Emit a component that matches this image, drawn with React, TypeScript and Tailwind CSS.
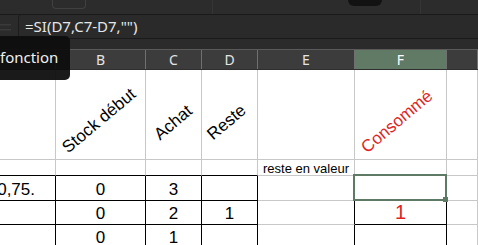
import React from "react";

const G = "border-[#c8c8c8]";

function Cell({
  className = "",
  children,
}: {
  className?: string;
  children?: React.ReactNode;
}) {
  return (
    <div className={`relative border-r border-b overflow-visible ${className}`}>
      {children}
    </div>
  );
}

export default function App() {
  const cols = "grid grid-cols-[56px_90px_56px_56px_97px_92px_1fr]";
  const rot =
    "absolute origin-bottom-left -rotate-[40deg] whitespace-nowrap text-[17px] leading-none";
  return (
    <div className="relative w-[478px] h-[245px] overflow-hidden bg-white font-['Liberation_Sans',Arial,sans-serif]">
      {/* toolbar */}
      <div className="h-[15px] bg-[#2c2c2c] border-b border-[#1a1a1a] flex">
        <div className="w-[52px]" />
        <div className="w-[34px] h-[9px] border-x border-b border-[#404040] rounded-b-[4px]" />
        <div className="w-[126px]" />
        <div className="w-px h-full bg-[#353535]" />
        <div className="w-[135px]" />
        <div className="w-[34px] h-[6px] bg-[#121212] rounded-b-[6px]" />
        <div className="w-[38px]" />
        <div className="w-px h-full bg-[#353535]" />
      </div>
      {/* formula bar */}
      <div className="h-[24px] bg-[#2b2b2b] border-b border-[#1a1a1a] flex">
        <div className="w-[18px] flex items-center">
          <svg width="12" height="10" viewBox="0 0 12 10">
            <rect x="0" y="2" width="11" height="1.5" fill="#3a3a3a" />
            <rect x="0" y="7" width="11" height="1.5" fill="#3a3a3a" />
          </svg>
        </div>
        <div className="flex-1 h-[23px] border-l border-[#1c1c1c] rounded-tl-[3px] bg-[#2a2a2a] flex items-center pl-[6px] text-[15px] text-[#e6e6e6] font-['Noto_Sans',sans-serif]">
          =SI(D7,C7-D7,"")
        </div>
      </div>
      <div className="h-[10px] bg-[#2b2b2b]" />
      {/* column header */}
      <div
        className={`${cols} h-[21px] bg-[#3c3c3c] border-t border-[#5a5a5a] border-b border-b-[#2f2f2f] text-[14px] text-[#e4e4e4] font-['Noto_Sans',sans-serif]`}
      >
        {["A", "B", "C", "D", "E", "F", "G"].map((c) => (
          <div
            key={c}
            className={`border-r border-[#707070] flex items-center justify-center leading-none ${
              c === "F" ? "bg-[#617a66] text-white" : ""
            }`}
          >
            {c === "A" || c === "G" ? "" : c}
          </div>
        ))}
      </div>
      {/* body */}
      <div className={`${cols} grid-rows-[90px_16px_25px_24px_30px] text-black`}>
        {/* row 1 */}
        <Cell className={G} />
        <Cell className={G}>
          <span className={`${rot} left-[14px] bottom-[3px]`}>Stock début</span>
        </Cell>
        <Cell className={G}>
          <span className={`${rot} left-[16px] bottom-[16px]`}>Achat</span>
        </Cell>
        <Cell className={G}>
          <span className={`${rot} left-[13px] bottom-[16px]`}>Reste</span>
        </Cell>
        <Cell className={G} />
        <Cell className={G}>
          <span className={`${rot} left-[14px] bottom-[3px] text-[#e02424]`}>Consommé</span>
        </Cell>
        <Cell className={G} />
        {/* row 2 */}
        <Cell className="border-r-[#c8c8c8] border-b-black" />
        <Cell className="border-r-[#c8c8c8] border-b-black" />
        <Cell className="border-r-[#c8c8c8] border-b-black" />
        <Cell className="border-r-[#c8c8c8] border-b-black" />
        <Cell className={G}>
          <span className="absolute left-[5px] bottom-[0px] text-[13px] leading-none whitespace-nowrap">
            reste en valeur
          </span>
        </Cell>
        <Cell className={G} />
        <Cell className={G} />
        {/* row 3 */}
        <Cell className="border-black overflow-hidden flex items-end justify-end pr-[20px] text-[17px] leading-none pb-[2px]">
          <span className="whitespace-nowrap">0,75.</span>
        </Cell>
        <Cell className="border-black flex items-end justify-center text-[17px] leading-none pb-[2px]">0</Cell>
        <Cell className="border-black flex items-end justify-center text-[17px] leading-none pb-[2px]">3</Cell>
        <Cell className="border-black" />
        <Cell className="border-r-black border-b-[#c8c8c8]" />
        <Cell className="border-black">
          <div className="absolute -left-[2px] -top-[2px] -right-[1px] -bottom-[1px] border-2 border-[#5f7a64] z-10">
            <div className="absolute -right-[3px] -bottom-[3px] w-[5px] h-[5px] bg-[#5f7a64]" />
          </div>
        </Cell>
        <Cell className={G} />
        {/* row 4 */}
        <Cell className="border-black" />
        <Cell className="border-black flex items-end justify-center text-[17px] leading-none pb-[2px]">0</Cell>
        <Cell className="border-black flex items-end justify-center text-[17px] leading-none pb-[2px]">2</Cell>
        <Cell className="border-black flex items-end justify-center text-[17px] leading-none pb-[2px]">1</Cell>
        <Cell className="border-r-black border-b-[#c8c8c8]" />
        <Cell className="border-black flex items-end justify-center text-[20px] leading-none pb-[2px] text-[#e02424]">1</Cell>
        <Cell className={G} />
        {/* row 5 */}
        <Cell className="border-black" />
        <Cell className="border-black flex items-start justify-center text-[17px] leading-none pt-[4px]">0</Cell>
        <Cell className="border-black flex items-start justify-center text-[17px] leading-none pt-[4px]">1</Cell>
        <Cell className="border-black" />
        <Cell className="border-r-black border-b-[#c8c8c8]" />
        <Cell className="border-black" />
        <Cell className={G} />
      </div>
      {/* tooltip */}
      <div className="absolute left-0 top-[36px] w-[70px] h-[44px] bg-[#0e0e0e]/95 rounded-r-[5px] flex items-center text-[15px] text-[#f0f0f0] font-['Noto_Sans',sans-serif] z-20">
        <span className="pl-0 -mt-[1px]">fonction</span>
      </div>
    </div>
  );
}
